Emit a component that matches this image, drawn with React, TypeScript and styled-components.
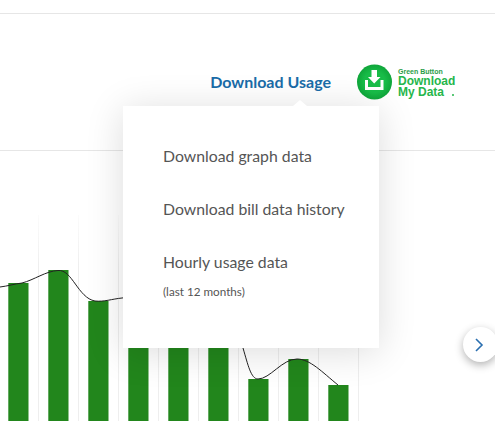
import styled, { createGlobalStyle } from "styled-components";

const bars = [
  { x: 8.3, top: 283 },
  { x: 48.3, top: 270 },
  { x: 88.3, top: 301 },
  { x: 128.3, top: 320 },
  { x: 168.3, top: 320 },
  { x: 208.3, top: 320 },
  { x: 248.3, top: 379 },
  { x: 288.3, top: 359 },
  { x: 328.3, top: 385 },
];

const gridLines = [38, 78, 118, 158, 198, 238, 278, 318, 358];

const menuItems = [
  { label: "Download graph data" },
  { label: "Download bill data history" },
  { label: "Hourly usage data", note: "(last 12 months)" },
];

const GlobalStyle = createGlobalStyle`
  html, body {
    margin: 0;
    background: #fff;
    font-family: Lato, "Open Sans", sans-serif;
  }
`;

const Page = styled.div`
  position: relative;
  width: 495px;
  height: 421px;
  overflow: hidden;
  background: #fff;
`;

const TopBar = styled.div`
  height: 13px;
  border-bottom: 1px solid #e6e6e6;
`;

const Header = styled.header`
  box-sizing: border-box;
  height: 137px;
  padding: 49px 37px 0 0;
  display: flex;
  justify-content: flex-end;
  align-items: flex-start;
  gap: 26px;
  border-bottom: 1px solid #e6e6e6;
`;

const DownloadLink = styled.a`
  margin-top: 9px;
  font-size: 16px;
  line-height: 20px;
  font-weight: 700;
  color: #1a6ca8;
  white-space: nowrap;
`;

const GreenButton = styled.div`
  display: flex;
  align-items: center;
  gap: 3px;
  height: 38px;
`;

const GreenText = styled.div`
  display: flex;
  flex-direction: column;
  width: 60px;
  padding-top: 2px;
  font-family: "Liberation Sans", Arial, sans-serif;
  font-weight: 700;
  color: #25b64b;
`;

const GreenSmall = styled.span`
  font-size: 7px;
  line-height: 8px;
  color: #2a9d48;
`;

const GreenLarge = styled.span`
  font-size: 12px;
  line-height: 11px;
  white-space: nowrap;
`;

const Dot = styled.i`
  display: inline-block;
  width: 2px;
  height: 2px;
  margin-left: 8px;
  border-radius: 50%;
  background: #25b64b;
`;

const ChartSvg = styled.svg`
  display: block;
  width: 495px;
  height: 270px;
`;

const Menu = styled.div`
  position: absolute;
  left: 123px;
  top: 106px;
  box-sizing: border-box;
  width: 256px;
  height: 242px;
  padding: 36px 0 0 40px;
  background: #fff;
  box-shadow: 0 4px 36px rgba(0, 0, 0, 0.14);

  &::before {
    content: "";
    position: absolute;
    left: 170px;
    top: -6px;
    border-left: 7px solid transparent;
    border-right: 7px solid transparent;
    border-bottom: 6px solid #fff;
  }
`;

const MenuItem = styled.div`
  margin-bottom: 26px;
  font-size: 15.8px;
  line-height: 27px;
  color: #555;
  white-space: nowrap;
`;

const Note = styled.div`
  margin-top: 9px;
  font-size: 11.7px;
  line-height: 14px;
  color: #555;
`;

const NextButton = styled.button`
  position: absolute;
  left: 463px;
  top: 327px;
  box-sizing: border-box;
  width: 35px;
  height: 35px;
  padding: 0 3px 0 0;
  display: flex;
  align-items: center;
  justify-content: center;
  border: none;
  border-radius: 50%;
  background: #fff;
  box-shadow: 0 3px 8px rgba(0, 0, 0, 0.3);
`;

const App = () => {
  return (
    <Page>
      <GlobalStyle />
      <TopBar />
      <Header>
        <DownloadLink>Download Usage</DownloadLink>
        <GreenButton>
          <svg width="38" height="38" viewBox="0 0 38 38">
            <defs>
              <radialGradient id="logoFill" cx="0.5" cy="0.5" r="0.5">
                <stop offset="0.6" stopColor="#18bc48" />
                <stop offset="1" stopColor="#0fa53a" />
              </radialGradient>
            </defs>
            <circle cx="17.5" cy="19" r="17.5" fill="url(#logoFill)" />
            <path d="M14.500 7h5.500v7h3.500L17.200 20.500 11 14h3.500z" fill="#fff" />
            <path d="M8 17h3v7h12.500v-7h3v10H8z" fill="#fff" />
          </svg>
          <GreenText>
            <GreenSmall>Green Button</GreenSmall>
            <GreenLarge>Download</GreenLarge>
            <GreenLarge>
              My Data
              <Dot />
            </GreenLarge>
          </GreenText>
        </GreenButton>
      </Header>
      <ChartSvg viewBox="0 151 495 270">
        <defs>
          <linearGradient id="gridFade" x1="0" y1="0" x2="0" y2="1">
            <stop offset="0" stopColor="#f2f2f2" stopOpacity="0.3" />
            <stop offset="0.25" stopColor="#eeeeee" />
          </linearGradient>
        </defs>
        {gridLines.map((x) => (
          <rect key={x} x={x} y={215} width={1} height={206} fill="url(#gridFade)" />
        ))}
        {bars.map((bar) => (
          <rect key={bar.x} x={bar.x} y={bar.top} width={20.2} height={421 - bar.top} fill="#22861c" />
        ))}
        <path
          d="M0 287 C8 286 14 284 22 283 C34 280 46 271 58 270.500 C72 269 78 298 95 301 C104 302 112 299 122 298 C160 292 228 292 243 348 C248 365 251 379 258 379 C270 379 282 359 297 359 C310 359 322 372 338 385"
          fill="none"
          stroke="#222"
          strokeWidth="1"
        />
      </ChartSvg>
      <Menu>
        {menuItems.map((item) => (
          <MenuItem key={item.label}>
            {item.label}
            {item.note && <Note>{item.note}</Note>}
          </MenuItem>
        ))}
      </Menu>
      <NextButton aria-label="Next">
        <svg width="12" height="16" viewBox="0 0 12 16">
          <path d="M3 2l6 6-6 6" fill="none" stroke="#2a6fb0" strokeWidth="1.600" />
        </svg>
      </NextButton>
    </Page>
  );
};

export default App;
